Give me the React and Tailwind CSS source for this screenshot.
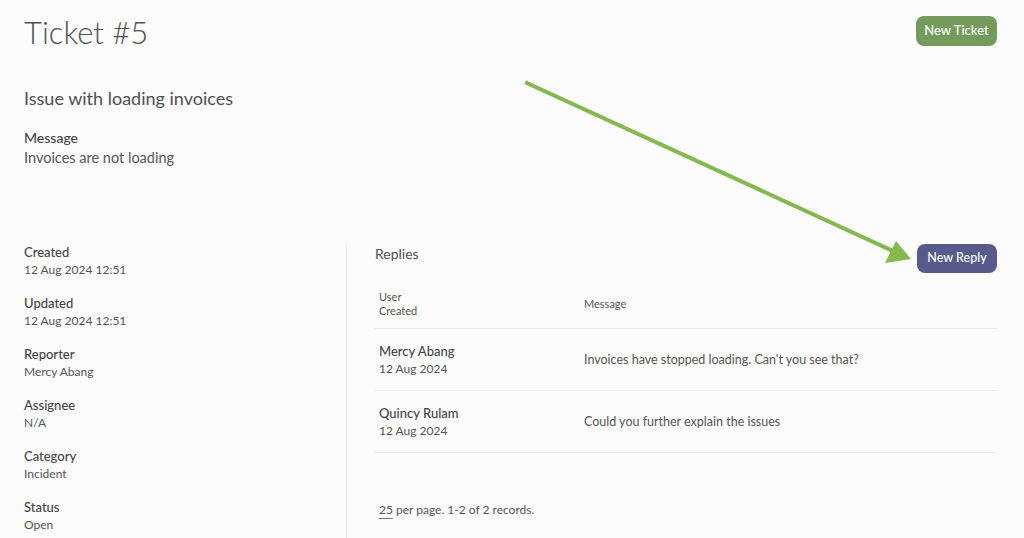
export default function App() {
  const fields = [
    ["Created", "12 Aug 2024 12:51"],
    ["Updated", "12 Aug 2024 12:51"],
    ["Reporter", "Mercy Abang"],
    ["Assignee", "N/A"],
    ["Category", "Incident"],
    ["Status", "Open"],
  ];
  const rows = [
    ["Mercy Abang", "12 Aug 2024", "Invoices have stopped loading. Can't you see that?"],
    ["Quincy Rulam", "12 Aug 2024", "Could you further explain the issues"],
  ];
  return (
    <div className="relative w-[1024px] h-[538px] overflow-hidden bg-[#fcfcfc] text-[#555] font-['Lato',sans-serif]">
      <div className="flex justify-between items-start px-6 pt-4 pr-[27px]">
        <h1 className="text-[31px] leading-[32px] font-light text-[#505050]">Ticket #5</h1>
        <button className="h-[30px] w-[81px] rounded-lg bg-[#729b5c] text-white text-[13px] font-medium">New Ticket</button>
      </div>
      <div className="px-6 mt-[38px]">
        <div className="text-[18px] leading-[24px] text-[#505050]">Issue with loading invoices</div>
        <div className="mt-[18px] text-[14px] leading-[20px] font-medium text-[#444]">Message</div>
        <div className="text-[14.5px] leading-[20px]">Invoices are not loading</div>
      </div>
      <div className="flex mt-[75px] h-[310px]">
        <div className="w-[347px] shrink-0 border-r border-[#ececec] pl-6 pt-[1px] flex flex-col gap-[17px]">
          {fields.map(([k, v]) => (
            <div key={k}>
              <div className="text-[13px] leading-[17px] font-medium text-[#444]">{k}</div>
              <div className="text-[12px] leading-[17px]">{v}</div>
            </div>
          ))}
        </div>
        <div className="flex-1 pl-[28px] pr-[27px] pt-[1px]">
          <div className="flex justify-between items-start">
            <div className="text-[14px] leading-[20px] text-[#505050]">Replies</div>
            <button className="h-[29px] w-[80px] rounded-lg bg-[#575a8a] text-white text-[12.5px] font-medium">New Reply</button>
          </div>
          <div className="mt-[9px]">
            <div className="flex border-b border-[#ececec] pt-2 pb-[10px] text-[11px] leading-[14px] px-1">
              <div className="w-[205px]">
                <div>User</div>
                <div>Created</div>
              </div>
              <div className="flex items-center">Message</div>
            </div>
            {rows.map(([n, d, m]) => (
              <div key={n} className="flex border-b border-[#ececec] pt-[14px] pb-[13px] px-1">
                <div className="w-[205px]">
                  <div className="text-[13px] leading-[17px] font-medium text-[#444]">{n}</div>
                  <div className="text-[12px] leading-[17px]">{d}</div>
                </div>
                <div className="flex items-center text-[12.5px]">{m}</div>
              </div>
            ))}
            <div className="mt-[48px] px-1 text-[12px] leading-[17px]">
              <span className="underline underline-offset-4 decoration-[#777]">25</span> per page. 1-2 of 2 records.
            </div>
          </div>
        </div>
      </div>
      <svg className="absolute inset-0 pointer-events-none" width="1024" height="538" viewBox="0 0 1024 538">
        <line x1="527" y1="83" x2="893" y2="251" stroke="#84b94f" strokeWidth="4" strokeLinecap="square" />
        <polygon points="911,259 896,241 885,263" fill="#84b94f" />
      </svg>
    </div>
  );
}
